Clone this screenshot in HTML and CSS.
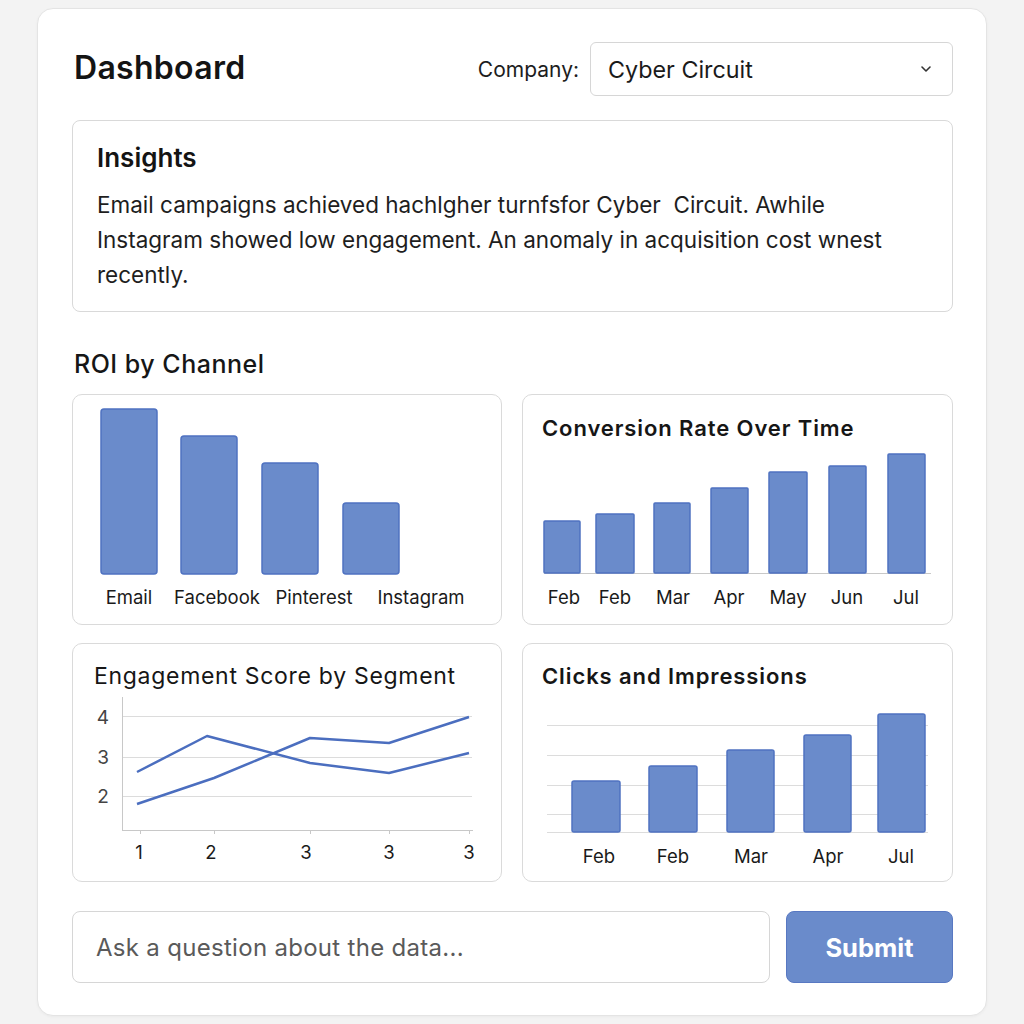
FILE: index.html
```html
<!DOCTYPE html>
<html lang="en">
<head>
<meta charset="utf-8">
<title>Dashboard</title>
<link rel="stylesheet" href="styles.css">
</head>
<body>
<main class="panel">
  <header class="top">
    <h1 class="title">Dashboard</h1>
    <div class="company">
      <span class="company-label">Company:</span>
      <div class="select">
        <span class="select-value">Cyber Circuit</span>
        <svg class="chevron" width="12" height="8" viewBox="0 0 12 8"><polyline points="2,2 6,6 10,2" fill="none" stroke="#333" stroke-width="1.6" stroke-linecap="round" stroke-linejoin="round"/></svg>
      </div>
    </div>
  </header>

  <section class="insights">
    <h2 class="insights-title">Insights</h2>
    <p class="insights-text">Email campaigns achieved hachlgher turnfsfor Cyber&nbsp; Circuit. Awhile<br>Instagram showed low engagement. An anomaly in acquisition cost wnest<br>recently.</p>
  </section>

  <h2 class="section-title">ROI by Channel</h2>

  <section class="charts">
    <div class="chart chart-roi">
      <svg class="plot plot-full" viewBox="73 395 428 229">
        <g class="bars">
          <rect x="101" y="409" width="56" height="165" rx="3"/>
          <rect x="181" y="436" width="56" height="138" rx="3"/>
          <rect x="262" y="463" width="56" height="111" rx="3"/>
          <rect x="343" y="503" width="56" height="71" rx="3"/>
        </g>
        <g class="labels">
          <text x="129" y="604">Email</text>
          <text x="217" y="604">Facebook</text>
          <text x="314" y="604">Pinterest</text>
          <text x="421" y="604">Instagram</text>
        </g>
      </svg>
    </div>

    <div class="chart">
      <h3 class="chart-title bold">Conversion Rate Over Time</h3>
      <svg class="plot plot-a" viewBox="523 441 429 183">
        <line class="axis" x1="544" y1="573.5" x2="931" y2="573.5"/>
        <g class="bars">
          <rect x="544" y="521" width="36" height="52" rx="1"/>
          <rect x="596" y="514" width="38" height="59" rx="1"/>
          <rect x="654" y="503" width="36" height="70" rx="1"/>
          <rect x="711" y="488" width="37" height="85" rx="1"/>
          <rect x="769" y="472" width="38" height="101" rx="1"/>
          <rect x="829" y="466" width="37" height="107" rx="1"/>
          <rect x="888" y="454" width="37" height="119" rx="1"/>
        </g>
        <g class="labels">
          <text x="564" y="604">Feb</text>
          <text x="615" y="604">Feb</text>
          <text x="673" y="604">Mar</text>
          <text x="729" y="604">Apr</text>
          <text x="788" y="604">May</text>
          <text x="847" y="604">Jun</text>
          <text x="906" y="604">Jul</text>
        </g>
      </svg>
    </div>

    <div class="chart">
      <h3 class="chart-title">Engagement Score by Segment</h3>
      <svg class="plot plot-b" viewBox="73 689 428 192">
        <g class="grid">
          <line x1="122" y1="716.5" x2="472" y2="716.5"/>
          <line x1="122" y1="757.5" x2="472" y2="757.5"/>
          <line x1="122" y1="796.5" x2="472" y2="796.5"/>
        </g>
        <g class="axis">
          <line x1="122.5" y1="697" x2="122.5" y2="831"/>
          <line x1="122" y1="830.5" x2="473" y2="830.5"/>
          <line x1="140.5" y1="830" x2="140.5" y2="834"/>
          <line x1="214.5" y1="830" x2="214.5" y2="834"/>
          <line x1="310.5" y1="830" x2="310.5" y2="834"/>
          <line x1="389.5" y1="830" x2="389.5" y2="834"/>
          <line x1="469.5" y1="830" x2="469.5" y2="834"/>
        </g>
        <g class="lines">
          <polyline points="137,772 207,736 310,763 389,773 469,753"/>
          <polyline points="137,804 214,778 310,738 389,743 469,717"/>
        </g>
        <g class="ylabels">
          <text x="103" y="724">4</text>
          <text x="103" y="764">3</text>
          <text x="103" y="803">2</text>
        </g>
        <g class="labels">
          <text x="139" y="859">1</text>
          <text x="211" y="859">2</text>
          <text x="306" y="859">3</text>
          <text x="389" y="859">3</text>
          <text x="469" y="859">3</text>
        </g>
      </svg>
    </div>

    <div class="chart">
      <h3 class="chart-title bold">Clicks and Impressions</h3>
      <svg class="plot plot-b" viewBox="523 689 429 192">
        <g class="grid">
          <line x1="547" y1="725.5" x2="928" y2="725.5"/>
          <line x1="547" y1="755.5" x2="928" y2="755.5"/>
          <line x1="547" y1="785.5" x2="928" y2="785.5"/>
          <line x1="547" y1="814.5" x2="928" y2="814.5"/>
          <line x1="547" y1="832.5" x2="928" y2="832.5"/>
        </g>
        <g class="bars">
          <rect x="572" y="781" width="48" height="51" rx="2"/>
          <rect x="649" y="766" width="48" height="66" rx="2"/>
          <rect x="727" y="750" width="47" height="82" rx="2"/>
          <rect x="804" y="735" width="47" height="97" rx="2"/>
          <rect x="878" y="714" width="47" height="118" rx="2"/>
        </g>
        <g class="labels">
          <text x="599" y="863">Feb</text>
          <text x="673" y="863">Feb</text>
          <text x="751" y="863">Mar</text>
          <text x="828" y="863">Apr</text>
          <text x="901" y="863">Jul</text>
        </g>
      </svg>
    </div>
  </section>

  <form class="ask" onsubmit="return false">
    <input class="ask-input" type="text" placeholder="Ask a question about the data...">
    <button class="ask-button" type="submit">Submit</button>
  </form>
</main>
</body>
</html>
```

FILE: styles.css
```css
* { box-sizing: border-box; }

html, body {
  margin: 0;
  background: #f3f3f3;
}

body {
  padding: 8px 37px;
  font-family: Inter, "Noto Sans", "Liberation Sans", sans-serif;
  color: #161616;
}

.panel {
  background: #ffffff;
  border: 1px solid #e4e4e4;
  border-radius: 16px;
  height: 1008px;
  padding: 33px 33px 0 34px;
  display: flex;
  flex-direction: column;
  box-shadow: 0 1px 3px rgba(0,0,0,0.04);
}

.top {
  display: flex;
  align-items: center;
  justify-content: space-between;
  height: 54px;
}

.title {
  margin: -3px 0 0 2px;
  font-size: 32px;
  font-weight: 600;
  letter-spacing: 0.3px;
  color: #141414;
}

.company {
  display: flex;
  align-items: center;
  gap: 11px;
}

.company-label {
  font-size: 21px;
  color: #1d1d1d;
}

.select {
  width: 363px;
  height: 54px;
  border: 1px solid #d6d6d6;
  border-radius: 6px;
  display: flex;
  align-items: center;
  justify-content: space-between;
  padding: 0 20px 0 17px;
}

.select-value {
  font-size: 23.3px;
  color: #1a1a1a;
}

.insights {
  margin-top: 24px;
  border: 1px solid #d9d9d9;
  border-radius: 8px;
  height: 192px;
  padding: 21px 24px 0 24px;
}

.insights-title {
  margin: 0;
  font-size: 26px;
  line-height: 32px;
  font-weight: 600;
  color: #141414;
}

.insights-text {
  margin: 13px 0 0 0;
  font-size: 22.5px;
  line-height: 35px;
  color: #1e1e1e;
  white-space: nowrap;
}

.section-title {
  margin: 37px 0 15px 2px;
  font-size: 25px;
  line-height: 30px;
  font-weight: 500;
  letter-spacing: 0.5px;
  color: #161616;
}

.charts {
  display: grid;
  grid-template-columns: 430px 431px;
  grid-template-rows: 231px 239px;
  column-gap: 20px;
  row-gap: 18px;
}

.chart {
  border: 1px solid #dadada;
  border-radius: 10px;
  display: flex;
  flex-direction: column;
  overflow: hidden;
}

.chart-title {
  margin: 0;
  padding: 19px 0 0 21px;
  height: 45px;
  line-height: 26px;
  font-size: 23px;
  letter-spacing: 0.7px;
  font-weight: 400;
  color: #161616;
  white-space: nowrap;
}

.chart-title.bold {
  font-weight: 600;
  font-size: 22px;
  letter-spacing: 0.9px;
  padding-left: 19px;
}

.chart:nth-child(2) .chart-title { height: 46px; padding-top: 20px; }

.plot { display: block; width: 100%; }
.plot-full { height: 229px; }
.plot-a { height: 183px; }
.plot-b { height: 192px; }

.bars rect {
  fill: #6a8bcb;
  stroke: #4f72c1;
  stroke-width: 1.5;
}

.labels text {
  font-family: Inter, "Noto Sans", "Liberation Sans", sans-serif;
  font-size: 18.5px;
  fill: #1a1a1a;
  text-anchor: middle;
}

.ylabels text {
  font-family: Inter, "Noto Sans", "Liberation Sans", sans-serif;
  font-size: 19px;
  fill: #444;
  text-anchor: middle;
}

.grid line {
  stroke: #dcdcdc;
  stroke-width: 1;
}

.axis, .axis line {
  stroke: #c8c8c8;
  stroke-width: 1;
}

.lines polyline {
  fill: none;
  stroke: #4b6ebf;
  stroke-width: 2.5;
  stroke-linejoin: round;
}

.ask {
  margin: 29px 0 0 0;
  display: flex;
  gap: 16px;
  height: 72px;
}

.ask-input {
  flex: 1;
  height: 72px;
  border: 1px solid #d6d6d6;
  border-radius: 8px;
  padding: 0 23px;
  font-family: Inter, "Noto Sans", "Liberation Sans", sans-serif;
  font-size: 24px;
  letter-spacing: 0.3px;
  color: #333;
  outline: none;
  background: #fff;
}

.ask-input::placeholder { color: #5a5a5a; }

.ask-button {
  width: 167px;
  height: 72px;
  border: 1px solid #5878c2;
  border-radius: 8px;
  background: #6a8bcb;
  color: #ffffff;
  font-family: Inter, "Noto Sans", "Liberation Sans", sans-serif;
  font-size: 25.5px;
  font-weight: 700;
  cursor: pointer;
}
```
